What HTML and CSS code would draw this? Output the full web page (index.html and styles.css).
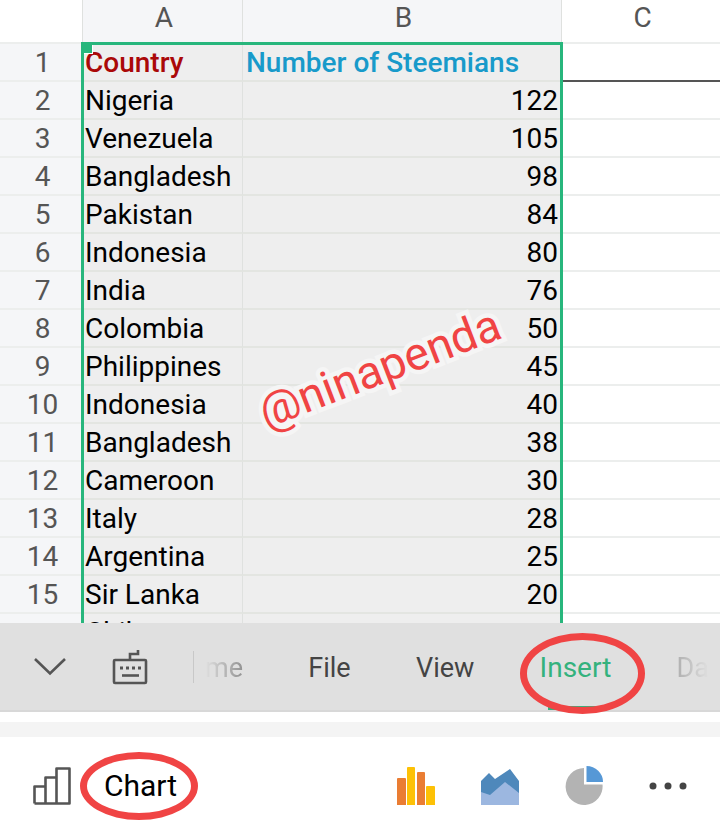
FILE: index.html
```html
<!DOCTYPE html>
<html lang="en">
<head>
    <meta charset="UTF-8">
    <meta name="viewport" content="width=device-width, initial-scale=1.0">
    <title>Steemians by Country</title>
    <link rel="stylesheet" href="styles.css">
</head>
<body>
    <main class="sheet">
        <table class="grid">
            <colgroup>
                <col class="col-num">
                <col class="col-a">
                <col class="col-b">
                <col class="col-c">
            </colgroup>
            <thead>
                <tr><td class="corner"></td><th class="selected" scope="col">A</th><th class="selected" scope="col">B</th><th scope="col">C</th></tr>
            </thead>
            <tbody>
                <tr class="titles"><th scope="row">1</th><td class="country-title">Country</td><td class="count-title">Number of Steemians</td><td></td></tr>
                <tr><th scope="row">2</th><td>Nigeria</td><td>122</td><td></td></tr>
                <tr><th scope="row">3</th><td>Venezuela</td><td>105</td><td></td></tr>
                <tr><th scope="row">4</th><td>Bangladesh</td><td>98</td><td></td></tr>
                <tr><th scope="row">5</th><td>Pakistan</td><td>84</td><td></td></tr>
                <tr><th scope="row">6</th><td>Indonesia</td><td>80</td><td></td></tr>
                <tr><th scope="row">7</th><td>India</td><td>76</td><td></td></tr>
                <tr><th scope="row">8</th><td>Colombia</td><td>50</td><td></td></tr>
                <tr><th scope="row">9</th><td>Philippines</td><td>45</td><td></td></tr>
                <tr><th scope="row">10</th><td>Indonesia</td><td>40</td><td></td></tr>
                <tr><th scope="row">11</th><td>Bangladesh</td><td>38</td><td></td></tr>
                <tr><th scope="row">12</th><td>Cameroon</td><td>30</td><td></td></tr>
                <tr><th scope="row">13</th><td>Italy</td><td>28</td><td></td></tr>
                <tr><th scope="row">14</th><td>Argentina</td><td>25</td><td></td></tr>
                <tr><th scope="row">15</th><td>Sir Lanka</td><td>20</td><td></td></tr>
                <tr><th scope="row"></th><td>Chile</td><td></td><td></td></tr>
            </tbody>
        </table>
        <div class="selection"></div>
        <div class="watermark">@ninapenda</div>
    </main>

    <nav class="toolbar">
        <button class="icon-button" aria-label="Collapse">
            <svg width="34" height="20" viewBox="0 0 34 20"><path d="M2 2 L17 16.500 L32 2" fill="none" stroke="#555" stroke-width="2.600"/></svg>
        </button>
        <button class="icon-button" aria-label="Keyboard">
            <svg width="36" height="36" viewBox="0 0 36 36" fill="none" stroke="#555" stroke-width="2.600">
                <rect x="2" y="11" width="32" height="23" rx="1"/>
                <path d="M18 11 V5 H26 V1"/>
                <path d="M8 19h3M14 19h3M20 19h3M26 19h3" stroke-width="3"/>
                <path d="M10 26.500h17"/>
            </svg>
        </button>
        <div class="tabs">
            <button class="tab fade-left">me</button>
            <button class="tab">File</button>
            <button class="tab">View</button>
            <button class="tab active">Insert</button>
            <button class="tab fade-right">Da</button>
        </div>
    </nav>

    <div class="divider"></div>

    <section class="chart-row">
        <button class="chart-button">
            <svg width="38" height="38" viewBox="0 0 38 38" fill="none" stroke="#555" stroke-width="2.600">
                <path d="M1.500 36.500 V19.500 H12.500 M12.500 36.500 V10.500 H23.500 M23.500 36.500 V1.500 H36.500 V36.500 Z H1.500" stroke-linejoin="round"/>
            </svg>
            <span class="chart-label">Chart</span>
        </button>
        <div class="chart-types">
            <button class="icon-button" aria-label="Column chart">
                <svg width="38" height="38" viewBox="0 0 38 38">
                    <path d="M0 38V12q0-1 1-1h7q1 0 1 1v26zM20 38V6q0-1 1-1h6q1 0 1 1v32z" fill="#ea7d33"/>
                    <path d="M10 38V1q0-1 1-1h6q1 0 1 1v37zM29 38V20q0-1 1-1h7q1 0 1 1v18z" fill="#fdc106"/>
                </svg>
            </button>
            <button class="icon-button" aria-label="Area chart">
                <svg width="38" height="38" viewBox="0 0 38 38">
                    <path d="M0 14 L8 6 L14 12 L29 2 L38 14 V38 H0Z" fill="#4e88bb"/>
                    <path d="M0 25 L9 28 L24 15 L38 26 V38 H0Z" fill="#9cb7e0"/>
                </svg>
            </button>
            <button class="icon-button" aria-label="Pie chart">
                <svg width="38" height="40" viewBox="0 0 38 40">
                    <path d="M19 2 A18.500 18.500 0 1 0 37.500 18.500 H19Z" fill="#b3b3b3"/>
                    <path d="M21.500 0 A17 16 0 0 1 38 16 H21.500Z" fill="#5698d6"/>
                </svg>
            </button>
            <button class="icon-button" aria-label="More">
                <svg width="38" height="8" viewBox="0 0 38 8" fill="#444"><circle cx="4" cy="4" r="3.500"/><circle cx="19" cy="4" r="3.500"/><circle cx="34" cy="4" r="3.500"/></svg>
            </button>
        </div>
    </section>
</body>
</html>
```

FILE: styles.css
```css
* {
    box-sizing: border-box;
}

body {
    margin: 0;
    height: 100vh;
    display: flex;
    flex-direction: column;
    background-color: #fff;
    color: #000;
    font-family: Roboto, sans-serif;
    font-size: 28px;
}

button {
    border: none;
    background: none;
    padding: 0;
    font: inherit;
    color: inherit;
    cursor: pointer;
}

svg {
    display: block;
}

/* Spreadsheet */
.sheet {
    position: relative;
    flex: 1;
    min-height: 0;
    overflow: hidden;
}

.grid {
    width: 100%;
    table-layout: fixed;
    border-collapse: separate;
    border-spacing: 0;
}

.col-num {
    width: 83px;
}

.col-a {
    width: 160px;
}

.col-b {
    width: 319px;
}

.grid th,
.grid td {
    height: 38px;
    padding: 2px 3px 0 2px;
    border-right: 1px solid #dfe1df;
    border-bottom: 2px solid #eceeed;
    line-height: 34px;
    white-space: nowrap;
    overflow: hidden;
}

.grid th {
    color: #555;
    font-weight: normal;
    text-align: center;
}

.grid tbody th {
    padding-left: 6px;
}

.grid thead th,
.grid thead td {
    height: 44px;
    padding: 0 0 6px 3px;
}

.grid tbody th,
.grid .selected {
    background-color: #f5f6f8;
}

.grid tbody td:nth-child(2),
.grid tbody td:nth-child(3) {
    background-color: #eee;
    border-bottom-color: #e3e5e1;
}

.grid tbody td:nth-child(3) {
    text-align: right;
}

.grid th:last-child,
.grid td:last-child {
    border-right: none;
}

.grid .titles td:last-child {
    border-bottom-color: #555;
}

.grid .country-title {
    color: #aa0808;
    font-weight: 500;
}

.grid tbody .count-title:nth-child(3) {
    padding-left: 3px;
    color: #189aca;
    font-weight: 500;
    text-align: left;
}

.selection {
    position: absolute;
    top: 42px;
    bottom: 0;
    left: 81px;
    width: 482px;
    border: 3px solid #27b67c;
    border-bottom: none;
}

.selection::before {
    content: "";
    position: absolute;
    top: 0;
    left: 0;
    width: 8px;
    height: 8px;
    background-color: #27b67c;
    border-right: 1px solid #fff;
    border-bottom: 1px solid #fff;
}

.watermark {
    position: absolute;
    top: 340px;
    left: 252px;
    color: #f04444;
    font-size: 46px;
    line-height: 56px;
    transform: rotate(-21deg);
    paint-order: stroke fill;
    -webkit-text-stroke: 9px #f5f5f5;
}

/* Bottom menu */
.toolbar {
    display: flex;
    align-items: center;
    height: 89px;
    padding-left: 33px;
    gap: 45px;
    background-color: #e0e0e0;
    border-bottom: 2px solid #d8d8d8;
}

.tabs {
    display: flex;
    flex: 1;
    align-items: center;
    justify-content: space-between;
    height: 32px;
    padding: 2px 11px 0 11px;
    border-left: 1px solid #c8c8c8;
    color: #444;
    font-size: 27px;
}

.fade-left {
    mask-image: linear-gradient(to right, transparent, rgba(0, 0, 0, 0.5));
}

.fade-right {
    mask-image: linear-gradient(to right, rgba(0, 0, 0, 0.3), transparent);
}

.active,
.chart-label {
    position: relative;
}

.active {
    color: #34b27d;
    font-size: 28px;
}

.active::before {
    content: "";
    position: absolute;
    bottom: -26px;
    left: 8px;
    right: 8px;
    height: 4px;
    background-color: #34b27d;
}

.active::after,
.chart-label::after {
    content: "";
    position: absolute;
    border: 7px solid #f04444;
    border-radius: 50%;
}

.active::after {
    inset: -18px -34px -30px -20px;
}

.divider {
    height: 15px;
    margin-top: 10px;
    background-color: #f4f4f4;
}

.chart-row {
    display: flex;
    align-items: center;
    justify-content: space-between;
    height: 89px;
    padding: 8px 33px 0 33px;
}

.chart-button {
    display: flex;
    align-items: center;
    gap: 33px;
    font-size: 30px;
}

.chart-label::after {
    inset: -16px -21px -17px -24px;
}

.chart-types {
    display: flex;
    align-items: center;
    gap: 46px;
}
```
